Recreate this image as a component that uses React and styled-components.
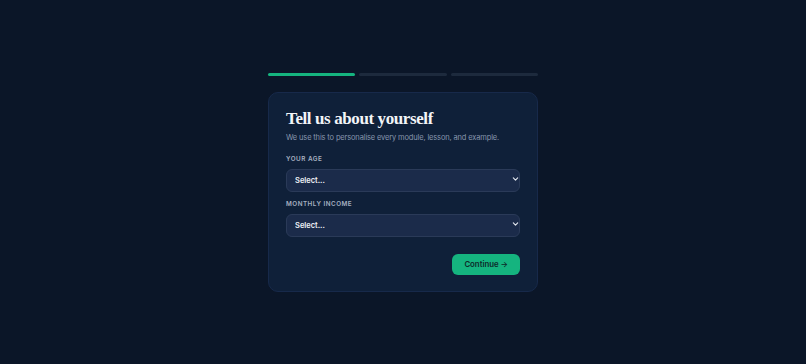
import React from "react";
import styled, { createGlobalStyle } from "styled-components";

const GlobalStyle = createGlobalStyle`
  html, body {
    margin: 0;
    padding: 0;
    background: #0b1628;
  }
  * {
    box-sizing: border-box;
  }
`;

const Page = styled.div`
  min-height: 100vh;
  display: flex;
  align-items: center;
  justify-content: center;
  background: #0b1628;
  font-family: "Inter", "Noto Sans", sans-serif;
`;

const Column = styled.div`
  width: 270px;
  display: flex;
  flex-direction: column;
  gap: 16px;
`;

const Steps = styled.div`
  display: flex;
  gap: 4px;
`;

const Step = styled.div`
  flex: 1;
  height: 3px;
  border-radius: 2px;
  background: ${(p) => (p.active ? "#15b47f" : "#1d2a3d")};
`;

const Card = styled.div`
  background: #0f2039;
  border: 1px solid #17294a;
  border-radius: 10px;
  padding: 15px 17px 16px 17px;
  display: flex;
  flex-direction: column;
`;

const Title = styled.h1`
  margin: 0;
  font-family: "Liberation Serif", "DejaVu Serif", serif;
  font-weight: 700;
  font-size: 17px;
  line-height: 22px;
  letter-spacing: -0.4px;
  color: #f3f5f8;
`;

const Subtitle = styled.p`
  margin: 2px 0 0;
  font-size: 7.5px;
  letter-spacing: -0.15px;
  line-height: 11px;
  color: #8796ad;
`;

const Field = styled.div`
  display: flex;
  flex-direction: column;
  gap: 3px;
  margin-top: ${(p) => p.top}px;
`;

const Label = styled.label`
  font-size: 6.3px;
  font-weight: 600;
  letter-spacing: 0.5px;
  text-transform: uppercase;
  color: #a7b1c2;
  line-height: 9px;
`;

const SelectWrap = styled.div`
  position: relative;
`;

const Select = styled.select`
  appearance: none;
  width: 100%;
  height: 23px;
  padding: 0 20px 0 8px;
  border-radius: 6px;
  border: 1px solid #2a3a58;
  background: #1b2b4a;
  color: #eef1f6;
  font-family: "Inter", "Noto Sans", sans-serif;
  font-size: 7.5px;
  font-weight: 600;
  outline: none;
`;

const Chevron = styled.svg`
  position: absolute;
  right: 1px;
  top: 9px;
  pointer-events: none;
`;

const Actions = styled.div`
  display: flex;
  justify-content: flex-end;
  margin-top: 17px;
`;

const Button = styled.button`
  height: 21px;
  padding: 0 12px;
  border: none;
  border-radius: 6px;
  background: #15b47f;
  color: #0d2a2a;
  font-family: "Inter", "Noto Sans", sans-serif;
  font-size: 7.8px;
  font-weight: 600;
  cursor: pointer;
`;

const ChevronIcon = () => (
  <Chevron width="7" height="6" viewBox="0 0 8 6">
    <path d="M1.5 1.8 L4 4.2 L6.5 1.8" fill="none" stroke="#e5e9f0" strokeWidth="1.3" strokeLinecap="round" strokeLinejoin="round" />
  </Chevron>
);

const SelectField = ({ label, top }) => (
  <Field top={top}>
    <Label>{label}</Label>
    <SelectWrap>
      <Select defaultValue="">
        <option value="">Select...</option>
      </Select>
      <ChevronIcon />
    </SelectWrap>
  </Field>
);

export default function App() {
  return (
    <Page>
      <GlobalStyle />
      <Column>
        <Steps>
          <Step active />
          <Step />
          <Step />
        </Steps>
        <Card>
          <Title>Tell us about yourself</Title>
          <Subtitle>We use this to personalise every module, lesson, and example.</Subtitle>
          <SelectField label="Your age" top={12} />
          <SelectField label="Monthly income" top={8} />
          <Actions>
            <Button>Continue →</Button>
          </Actions>
        </Card>
      </Column>
    </Page>
  );
}
